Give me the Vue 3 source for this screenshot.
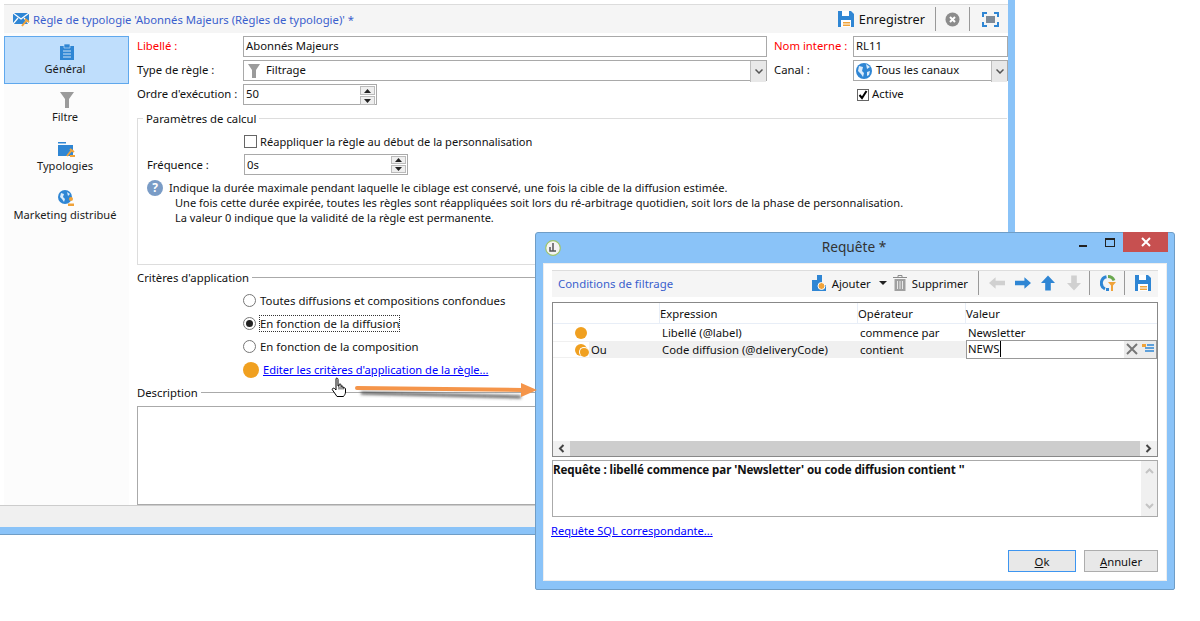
<template>
  <div class="stage">
    <!-- main window -->
    <div class="win">
      <div class="win-inner">
        <header class="titlebar">
          <svg class="t-ico" width="18" height="16" viewBox="0 0 18 16">
            <path d="M0 2h16v11H0z" fill="#2f86d4" />
            <path d="M0 2l8 6 8-6M0 13l5-6M16 13l-5-6" fill="none" stroke="#fff" stroke-width="1.2" />
            <path d="M9 15l4-5M12 8l4 3" stroke="#f0a33a" stroke-width="2" fill="none" />
          </svg>
          <span class="t-title">Règle de typologie 'Abonnés Majeurs (Règles de typologie)' *</span>
          <div class="t-actions">
            <svg width="16" height="16" viewBox="0 0 16 16"><path d="M0 0h13l3 3v13H0z" fill="#2f86d4" /><path d="M4 0h7v5H4z" fill="#fff" /><path d="M3 9h10v7H3z" fill="#fff" /><path d="M5 11h7v1.5H5zM5 13.5h7V15H5z" fill="#f0a33a" /></svg>
            <span class="t-save">Enregistrer</span>
            <i class="t-sep s1"></i>
            <svg width="15" height="15" viewBox="0 0 15 15"><circle cx="7.5" cy="7.5" r="7" fill="#8c8c8c" /><path d="M5 5l5 5M10 5l-5 5" stroke="#fff" stroke-width="2" /></svg>
            <i class="t-sep"></i>
            <svg width="17" height="15" viewBox="0 0 17 15"><path d="M1 5V1h4M12 1h4v4M16 10v4h-4M5 14H1v-4" fill="none" stroke="#2f86d4" stroke-width="2" /><path d="M4 4h9v7H4z" fill="#7f8a96" /></svg>
          </div>
        </header>

        <div class="body">
          <nav class="side">
            <div v-for="n in nav" :key="n.label" :class="['nav-item', { on: n.on }]">
              <svg v-if="n.icon === 'clip'" width="14" height="16" viewBox="0 0 14 16"><path d="M0 2h14v14H0z" fill="#2f86d4" /><path d="M4 0h6v4H4z" fill="#2f86d4" stroke="#d4e7fa" stroke-width=".6" /><path d="M3 7h8M3 10h8M3 13h8" stroke="#cfe3f7" /></svg>
              <svg v-else-if="n.icon === 'filter'" width="14" height="16" viewBox="0 0 14 16"><path d="M0 0h14L9 7v9H5V7z" fill="#9b9b9b" /></svg>
              <svg v-else-if="n.icon === 'folder'" width="17" height="15" viewBox="0 0 17 15"><path d="M0 0h8v1.5H0zM0 3h15v11H0z" fill="#2f86d4" /><path d="M9 14l4-5M12 7l4 3" stroke="#f0a33a" stroke-width="2" fill="none" /><path d="M12 13h5v2h-5z" fill="#f0a33a" /></svg>
              <svg v-else width="17" height="16" viewBox="0 0 17 16"><circle cx="7" cy="7" r="7" fill="#2f86d4" /><path d="M3 3l3 1-1 3 2 2-1 3-2-3-2-2zM9 2l3 2-2 2z" fill="#d9ebfb" /><circle cx="13" cy="9" r="2" fill="#f0a33a" /><path d="M10 16v-2.5h6V16z" fill="#f0a33a" /></svg>
              <span>{{ n.label }}</span>
            </div>
          </nav>

          <main class="form">
            <div class="top-grid">
              <label class="req">Libellé :</label>
              <div class="field">Abonnés Majeurs</div>
              <label class="req">Nom interne :</label>
              <div class="field">RL11</div>

              <label>Type de règle :</label>
              <div class="field combo">
                <svg width="12" height="14" viewBox="0 0 12 14"><path d="M0 0h12L8 6v8H4V6z" fill="#9b9b9b" /></svg>
                <span>Filtrage</span>
                <i class="drop"><svg width="8" height="5" viewBox="0 0 8 5"><path d="M.5.5L4 4 7.500.500" fill="none" stroke="#555" stroke-width="1.500" /></svg></i>
              </div>
              <label>Canal :</label>
              <div class="field combo chan">
                <svg width="16" height="16" viewBox="0 0 16 16"><circle cx="8" cy="8" r="8" fill="#2f86d4" /><path d="M3 3l4 1-1 4 2 2-1 4-2-3-3-3zM10 1l4 3-3 2zM11 9l3-1-1 4-2 1z" fill="#dcecfb" /></svg>
                <span>Tous les canaux</span>
                <i class="drop"><svg width="8" height="5" viewBox="0 0 8 5"><path d="M.5.5L4 4 7.500.500" fill="none" stroke="#555" stroke-width="1.500" /></svg></i>
              </div>

              <label>Ordre d'exécution :</label>
              <div class="field spin short">
                <span>50</span>
                <i class="spin-btns">
                  <b><svg width="7" height="4" viewBox="0 0 7 4"><path d="M3.500 0L7 4H0z" fill="#222" /></svg></b>
                  <b><svg width="7" height="4" viewBox="0 0 7 4"><path d="M3.500 4L7 0H0z" fill="#222" /></svg></b>
                </i>
              </div>
              <span></span>
              <div class="active-row">
                <i class="check"><svg width="10" height="10" viewBox="0 0 10 10"><path d="M1.500 5l2.500 3 4.500-7" fill="none" stroke="#000" stroke-width="2" /></svg></i><span>Active</span>
              </div>
            </div>

            <fieldset class="calc">
              <legend>Paramètres de calcul</legend>
              <div class="reapply"><i class="check"></i>Réappliquer la règle au début de la personnalisation</div>
              <div class="freq">
                <label>Fréquence :</label>
                <div class="field spin long">
                  <span>0s</span>
                  <i class="spin-btns">
                    <b><svg width="7" height="4" viewBox="0 0 7 4"><path d="M3.500 0L7 4H0z" fill="#222" /></svg></b>
                    <b><svg width="7" height="4" viewBox="0 0 7 4"><path d="M3.500 4L7 0H0z" fill="#222" /></svg></b>
                  </i>
                </div>
              </div>
              <div class="hint">
                <i class="help">?</i>
                <div>
                  <p>Indique la durée maximale pendant laquelle le ciblage est conservé, une fois la cible de la diffusion estimée.</p>
                  <p class="in">Une fois cette durée expirée, toutes les règles sont réappliquées soit lors du ré-arbitrage quotidien, soit lors de la phase de personnalisation.</p>
                  <p class="in">La valeur 0 indique que la validité de la règle est permanente.</p>
                </div>
              </div>
            </fieldset>

            <div class="rule-title"><span>Critères d'application</span><i></i></div>
            <div class="radios">
              <div class="radio"><i class="r"></i>Toutes diffusions et compositions confondues</div>
              <div class="radio"><i class="r on"></i><span class="focus">En fonction de la diffusion</span></div>
              <div class="radio"><i class="r"></i>En fonction de la composition</div>
              <div class="edit"><i class="dot big"></i><a>Editer les critères d'application de la règle...</a></div>
            </div>

            <div class="rule-title desc"><span>Description</span><i></i></div>
            <div class="desc-box"></div>
          </main>
        </div>
        <div class="status"></div>
      </div>
    </div>

    <!-- query dialog -->
    <section class="dlg">
      <header class="dlg-title">
        <svg class="dlg-logo" width="16" height="16" viewBox="0 0 16 16"><circle cx="8" cy="8" r="7.300" fill="#f4f4f4" stroke="#9dc46a" stroke-width="1.200" /><path d="M8 3v8M5 7v4h6" stroke="#555" stroke-width="1.500" fill="none" /></svg>
        <span class="dlg-name">Requête *</span>
        <div class="wbtns">
          <i class="w-min"></i>
          <i class="w-max"></i>
          <i class="w-close"><svg width="10" height="10" viewBox="0 0 10 10"><path d="M1 1l8 8M9 1L1 9" stroke="#fff" stroke-width="2" /></svg></i>
        </div>
      </header>
      <div class="dlg-body">
        <div class="toolbar">
          <span class="tb-title">Conditions de filtrage</span>
          <div class="tb-actions">
            <svg width="14" height="16" viewBox="0 0 14 16"><path d="M0 5h5V0h5v10h4v6H0z" fill="#2f86d4" /><circle cx="9.500" cy="11" r="3.500" fill="#f0a33a" stroke="#fff" /></svg>
            <span class="tb-add">Ajouter</span>
            <i class="caret"></i>
            <svg width="14" height="16" viewBox="0 0 14 16"><path d="M0 2.500h14M5 2V.5h4V2" stroke="#8a8a8a" fill="none" /><path d="M1.500 4h11v12h-11z" fill="#a0a0a0" /><path d="M4.500 6v8M7 6v8M9.500 6v8" stroke="#e8e8e8" /></svg>
            <span>Supprimer</span>
            <i class="t-sep s2 first"></i>
            <svg width="16" height="12" viewBox="0 0 17 12"><path d="M17 3.500H7V0L0 6l7 6V8.500h10z" fill="#d0d0d0" /></svg>
            <svg class="a" width="16" height="12" viewBox="0 0 17 12"><path d="M0 3.500h10V0l7 6-7 6V8.500H0z" fill="#2f86d4" /></svg>
            <svg class="a" width="14" height="16" viewBox="0 0 15 16"><path d="M4.500 16V8H0l7.500-8L15 8h-4.500v8z" fill="#2f86d4" /></svg>
            <svg class="a down" width="14" height="16" viewBox="0 0 15 16"><path d="M4.500 0v8H0l7.500 8L15 8h-4.500V0z" fill="#d0d0d0" /></svg>
            <i class="t-sep s2"></i>
            <svg width="16" height="16" viewBox="0 0 16 16"><path d="M6.500 1.800A6.500 6.500 0 0 0 5 14" fill="none" stroke="#2f86d4" stroke-width="3" /><path d="M8 1.500a6.500 6.500 0 0 1 6 4" fill="none" stroke="#6aa84f" stroke-width="3" /><path d="M6 14.500h3" fill="none" stroke="#2f86d4" stroke-width="3" /><path d="M8 7h8l-3 3.500V16h-2v-5.500z" fill="#f0a33a" /></svg>
            <i class="t-sep s2"></i>
            <svg width="16" height="16" viewBox="0 0 16 16"><path d="M0 0h13l3 3v13H0z" fill="#2f86d4" /><path d="M4 0h7v5H4z" fill="#fff" /><path d="M3 9h10v7H3z" fill="#fff" /><path d="M5 11h7v1.500H5zM5 13.500h7V15H5z" fill="#f0a33a" /></svg>
          </div>
        </div>

        <div class="grid">
          <div class="g-head">
            <span class="c0"></span><span class="c1">Expression</span><span class="c2">Opérateur</span><span class="c3">Valeur</span>
          </div>
          <div class="g-row">
            <span class="c0"><i class="dot"></i></span><span class="c1">Libellé (@label)</span><span class="c2">commence par</span><span class="c3">Newsletter</span>
          </div>
          <div class="g-row sel">
            <span class="c0"><i class="dot dbl"></i><em>Ou</em></span><span class="c1">Code diffusion (@deliveryCode)</span><span class="c2">contient</span>
            <span class="c3 edit-cell"><span class="caret-text">NEWS</span>
              <i class="cell-btns">
                <svg width="12" height="12" viewBox="0 0 12 12"><path d="M1 1l10 10M11 1L1 11" stroke="#777" stroke-width="2" /></svg>
                <svg width="12" height="10" viewBox="0 0 12 10"><path d="M0 0h4v3H0z" fill="#f0a33a" /><path d="M5 1h7M3 4h9M3 7h9" stroke="#2f86d4" stroke-width="1.500" /></svg>
              </i>
            </span>
          </div>
          <div class="g-fill"></div>
          <div class="hscroll">
            <i class="hb"><svg width="7" height="9" viewBox="0 0 7 9"><path d="M5.500 1L2 4.500 5.500 8" fill="none" stroke="#444" stroke-width="2" /></svg></i>
            <i class="track"></i>
            <i class="hb"><svg width="7" height="9" viewBox="0 0 7 9"><path d="M1.500 1L5 4.500 1.500 8" fill="none" stroke="#444" stroke-width="2" /></svg></i>
          </div>
        </div>

        <div class="sentence">
          <strong>Requête : libellé commence par 'Newsletter' ou code diffusion contient ''</strong>
          <i class="vscroll">
            <svg width="9" height="6" viewBox="0 0 9 6"><path d="M1 5l3.500-3.500L8 5" fill="none" stroke="#c4c4c4" stroke-width="2" /></svg>
            <svg width="9" height="6" viewBox="0 0 9 6"><path d="M1 1l3.500 3.500L8 1" fill="none" stroke="#c4c4c4" stroke-width="2" /></svg>
          </i>
        </div>

        <a class="sql">Requête SQL correspondante...</a>

        <div class="dlg-foot">
          <button class="btn def"><u>O</u>k</button>
          <button class="btn"><u>A</u>nnuler</button>
        </div>
      </div>
    </section>

    <!-- callout over both windows -->
    <svg class="callout" width="190" height="28" viewBox="0 0 190 28">
      <defs><filter id="sh" x="-10%" y="-200%" width="120%" height="500%"><feGaussianBlur stdDeviation="1.500" /></filter></defs>
      <path d="M8 13L168 17" stroke="#333" stroke-opacity=".8" stroke-width="3" fill="none" filter="url(#sh)" />
      <path d="M4 8L170 10" stroke="#f5954a" stroke-width="4" stroke-linecap="round" fill="none" />
      <path d="M168 3l16 7-16 7z" fill="#f5954a" />
    </svg>
    <svg class="hand" width="17" height="21" viewBox="0 0 17 21">
      <path d="M5 1.500c1-1 2 0 2 1V9l1 0V7.500c1-.8 2-.5 2 .5v1.500c1-.8 2-.5 2 .5v1c1-.6 2.500-.2 2.500 1v3c0 2-1 3-2 4.500H6L1.500 13c-.8-1 .5-2.500 2-1.500L5 13z" fill="#fff" stroke="#000" stroke-width="1" stroke-linejoin="round" />
      <path d="M8 9.500v3M10 9.500v3M12 10.500v2" stroke="#000" stroke-width=".8" fill="none" />
    </svg>
  </div>
</template>

<script setup>
const nav = [
  { label: 'Général', icon: 'clip', on: true },
  { label: 'Filtre', icon: 'filter' },
  { label: 'Typologies', icon: 'folder' },
  { label: 'Marketing distribué', icon: 'globe' },
]
</script>

<style>
html, body { margin: 0; background: #fff; }
</style>

<style scoped>
.stage {
  width: 1200px; height: 621px; position: relative; overflow: hidden; background: #fff;
  font-family: "Noto Sans", "Open Sans", sans-serif; font-size: 11.3px; color: #111; line-height: 15px;
}
i { font-style: normal; display: block; }
label { white-space: nowrap; }

.win {
  width: 1015px; height: 535px; box-sizing: border-box;
  background: #8ac3f8; padding: 0 7px 0 0; border-bottom: 1px solid #6f9dc6;
}
.win-inner { height: 527px; background: #fff; display: flex; flex-direction: column; padding-left: 4px; box-sizing: border-box; }
.titlebar {
  height: 28px; margin-top: 4px; flex-shrink: 0; background: #f5f5f5; border-top: 1px solid #dcdcdc;
  display: flex; align-items: center; padding-left: 9px; gap: 2px; box-sizing: content-box;
}
.t-title { color: #3a5fcd; }
.t-actions { margin-left: auto; display: flex; align-items: center; gap: 5px; padding-right: 9px; }
.t-save { font-size: 12.7px; margin-right: 1px; }
.t-sep { width: 1px; height: 24px; background: #999; margin: 0 7px 0 4px; }
.t-sep.s1 { margin: 0 4px; }
.t-sep.s2 { margin: 0 5px 0 3px; }
.t-sep.s2.first { margin: 0 5px; }

.body { flex: 1; display: flex; min-height: 0; }
.side { width: 125px; flex-shrink: 0; background: #fcfcfc; padding-top: 3px; margin-right: 8px; }
.nav-item {
  height: 48px; display: flex; flex-direction: column; align-items: center; justify-content: center;
  gap: 1px; color: #1a1a1a; margin-bottom: 1px; white-space: nowrap; font-size: 11.1px;
}
.nav-item span { margin-right: 3px; }
.nav-item.on { background: #bfdefc; border: 1px solid #5fa8ed; box-sizing: border-box; margin-bottom: 0; }

.form { flex: 1; min-width: 0; padding-top: 3px; }
.top-grid {
  display: grid; grid-template-columns: 106px 524px 86px 155px;
  grid-auto-rows: 21px; row-gap: 3px; align-items: center;
}
.top-grid > label { padding-bottom: 2px; }
.top-grid > .field { padding-bottom: 2px; }
.top-grid > .field > svg, .top-grid > .field > i { margin-bottom: -2px; }
.top-grid > label:nth-child(3), .top-grid > label:nth-child(7) { padding-left: 7px; }
.req { color: #f00; }
.field {
  height: 21px; box-sizing: border-box; border: 1px solid #a9a9a9; background: #fff;
  display: flex; align-items: center; padding-left: 2px; position: relative;
}
.combo { gap: 6px; padding-left: 4px; }
.chan { gap: 4px; padding-left: 2px; }
.combo .drop {
  position: absolute; right: 0; top: 0; bottom: 0; width: 15px; background: #e8e8e8;
  border-left: 1px solid #bdbdbd; display: flex; align-items: center; justify-content: center;
}
.short { width: 134px; }
.long { width: 164px; }
.spin-btns { position: absolute; right: 1px; top: 1px; bottom: 1px; width: 15px; box-sizing: border-box; display: flex; flex-direction: column; gap: 1px; }
.spin-btns b { flex: 1; background: #eee; border: 1px solid #bbb; display: flex; align-items: center; justify-content: center; }
.active-row { display: flex; align-items: center; gap: 3px; padding-left: 4px; }
.active-row span { position: relative; top: -1px; }
.check {
  width: 10px; height: 10px; border: 1px solid #666; background: #fff; flex-shrink: 0; padding: 0;
}
.check svg { display: block; }

.calc {
  padding: 0; height: 154px; box-sizing: border-box;
  border: 0; border-top: 1px solid #ddd; border-left: 1px solid #ddd; border-bottom: 1px solid #ddd; margin: 6px 1px 0 0;
  min-width: 0; position: relative;
}
.calc legend { padding: 0 3px; margin-left: 5px; }
.reapply { display: flex; align-items: center; gap: 3px; margin-left: 106px; height: 17px; margin-top: 7px; font-size: 11.1px; }
.reapply .check { width: 11px; height: 11px; }
.freq { display: flex; align-items: center; margin-top: 4px; margin-left: 9px; }
.freq label { width: 97px; }
.hint { display: flex; gap: 6px; margin-top: 5px; margin-left: 9px; font-size: 11.05px; }
.hint p { margin: 0; white-space: nowrap; }
.hint .in { margin-left: 6px; }
.help {
  width: 16px; height: 16px; border-radius: 50%; background: #7a9cc6; color: #fff;
  font-weight: 700; font-size: 12px; line-height: 16px; text-align: center; flex-shrink: 0;
}

.rule-title { display: flex; align-items: center; gap: 3px; margin-top: 4px; height: 17px; }
.rule-title i { flex: 1; height: 1px; background: #aaa; }
.radios { padding-left: 106px; margin-top: 6px; }
.radio { display: flex; align-items: center; gap: 4px; height: 17px; margin-bottom: 6px; white-space: nowrap; font-size: 11.4px; }
.r { width: 11px; height: 11px; border-radius: 50%; border: 1px solid #777; background: #fff; position: relative; flex-shrink: 0; }
.r.on::after { content: ''; position: absolute; left: 2px; top: 2px; width: 7px; height: 7px; border-radius: 50%; background: #222; }
.focus { outline: 1px dotted #333; }
.edit { display: flex; align-items: center; gap: 4px; height: 17px; font-size: 11.1px; }
a { color: #00f; text-decoration: underline; }
.dot { width: 12px; height: 12px; border-radius: 50%; background: #f0a020; display: inline-block; flex-shrink: 0; }
.dot.big { width: 16px; height: 16px; }
.dot.dbl { position: relative; }
.dot.dbl::after { content: ''; position: absolute; left: 4px; top: 3px; width: 9px; height: 9px; border-radius: 50%; background: #f0a020; border-left: 1px solid #fff; border-top: 1px solid #fff; }
.desc { margin-top: 6px; }
.desc-box { height: 99px; margin-top: 5px; border: 1px solid #aaa; box-sizing: border-box; margin-right: 1px; border-right: 0; }
.status { height: 22px; flex-shrink: 0; box-sizing: border-box; background: #f0f0f0; border-top: 1px solid #ccc; margin-left: -4px; }

.callout { position: absolute; left: 353px; top: 380px; }
.hand { position: absolute; left: 331px; top: 377px; }

.dlg {
  position: absolute; left: 535px; top: 232px; width: 640px; height: 358px; box-sizing: border-box;
  background: #8ac3f8; border: 1px solid #6f9dc6; border-radius: 3px 3px 2px 2px;
  display: flex; flex-direction: column;
}
.dlg-title { height: 30px; display: flex; align-items: center; position: relative; flex-shrink: 0; }
.dlg-logo { margin-left: 9px; }
.dlg-name { position: absolute; left: 0; right: 0; top: 6px; text-align: center; font-size: 13.7px; color: #333; padding-right: 2px; }
.wbtns { margin-left: auto; display: flex; align-items: flex-start; height: 100%; padding-right: 6px; position: relative; }
.w-min { width: 8px; height: 2px; background: #222; margin: 12px 18px 0 0; }
.w-max { width: 8px; height: 6px; border: 1px solid #222; border-top-width: 2px; margin: 5px 8px 0 0; }
.w-close { width: 45px; height: 20px; margin-top: -1px; background: #c75050; display: flex; align-items: center; justify-content: center; }
.dlg-body { flex: 1; margin: 0 7px 8px; background: #fff; padding: 6px 8px 0 8px; display: flex; flex-direction: column; min-height: 0; border: 1px solid #eee; }
.toolbar { height: 27px; box-sizing: border-box; flex-shrink: 0; background: #f5f5f5; border-top: 1px solid #ddd; display: flex; align-items: center; padding-left: 6px; padding-bottom: 2px; }
.tb-title { color: #3a5fcd; font-size: 11.4px; }
.tb-actions { margin-left: auto; display: flex; align-items: center; gap: 5px; padding-right: 7px; }
.tb-actions .a { margin-left: 5px; }
.tb-actions .a.down { margin-left: 7px; }
.tb-add { margin-left: 1px; }
.caret { width: 0; height: 0; border-left: 4px solid transparent; border-right: 4px solid transparent; border-top: 4px solid #222; margin: 0 1px 0 3px; }

.grid { margin-top: 5px; height: 155px; box-sizing: border-box; border: 1px solid #888; display: flex; flex-direction: column; flex-shrink: 0; }
.g-head { height: 20px; display: flex; align-items: center; border-bottom: 1px solid #e8eef7; flex-shrink: 0; }
.g-head span { height: 100%; line-height: 21px; border-right: 1px solid #e8eef7; padding-left: 0; box-sizing: border-box; }
.g-row { height: 17px; display: flex; align-items: center; flex-shrink: 0; }
.c0 { width: 107px; padding-left: 22px; box-sizing: border-box; display: flex; align-items: center; gap: 4px; }
.c0 em { font-style: normal; }
.c1 { width: 198px; box-sizing: border-box; padding-left: 2px; }
.c2 { width: 108px; box-sizing: border-box; padding-left: 2px; }
.c3 { flex: 1; box-sizing: border-box; padding-left: 2px; }
.g-head .c3 { border-right: 0; }
.sel { background: #f0f0f0; }
.sel .c0 { background: linear-gradient(90deg, #fff 36px, #f0f0f0 36px); }
.edit-cell { height: 19px; margin-top: -1px; border: 1px solid #999; background: #fff; display: flex; align-items: center; padding-left: 1px; position: relative; }
.caret-text { border-right: 1px solid #000; line-height: 16px; }
.cell-btns { position: absolute; right: 0; top: 0; bottom: 0; width: 32px; background: #ececec; display: flex; align-items: center; gap: 4px; justify-content: center; }
.g-fill { flex: 1; }
.hscroll { height: 15px; display: flex; background: #f0f0f0; flex-shrink: 0; }
.hb { width: 17px; display: flex; align-items: center; justify-content: center; }
.track { flex: 1; background: #cdcdcd; }

.sentence { position: relative; height: 57px; margin-top: 3px; border: 1px solid #aaa; box-sizing: border-box; padding: 1px 0; flex-shrink: 0; }
.sentence strong { font-weight: 700; font-size: 11.6px; letter-spacing: -.1px; }
.vscroll { position: absolute; right: 0; top: 0; bottom: 0; width: 16px; background: #f0f0f0; display: flex; flex-direction: column; align-items: center; justify-content: space-between; padding: 7px 0; box-sizing: border-box; }
.sql { margin-top: 6px; margin-left: -1px; display: block; flex-shrink: 0; font-size: 11.1px; }
.dlg-foot { margin-top: auto; display: flex; justify-content: flex-end; gap: 8px; padding-bottom: 8px; }
.btn { width: 68px; height: 22px; padding: 0; background: #e8e8e8; border: 1px solid #adadad; font: inherit; color: #111; }
.btn.def { border-color: #3d95f0; }
.btn:nth-child(2) { width: 74px; }
</style>
